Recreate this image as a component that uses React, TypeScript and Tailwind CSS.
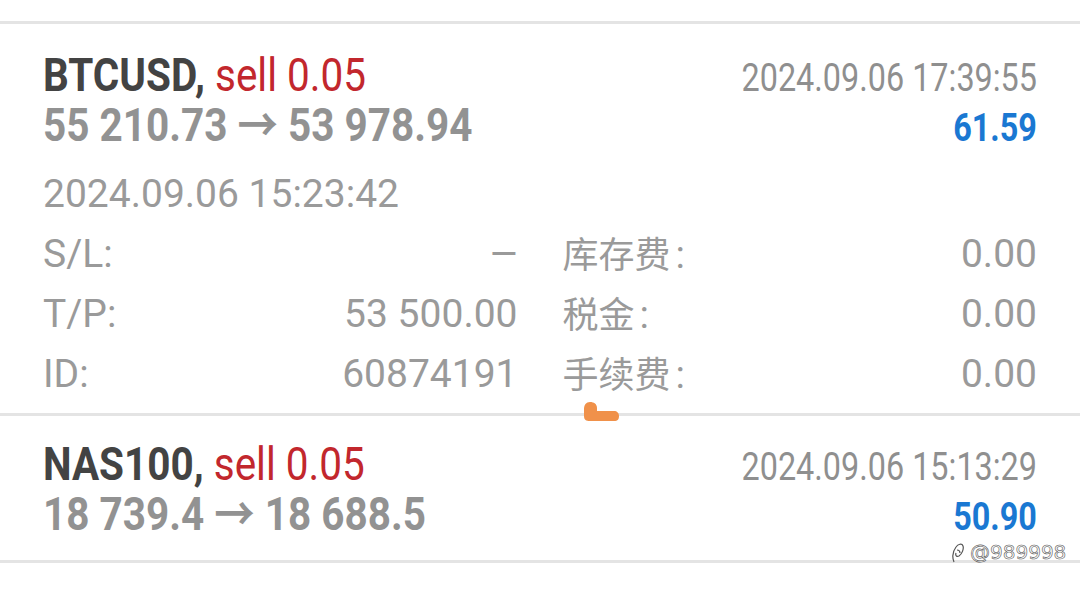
import React from "react";

type Deal = {
  symbol: string;
  side: string;
  open: string;
  close: string;
  time: string;
  profit: string;
};

const Divider = () => <div className="h-[3px] w-full bg-[#e4e4e4]" />;

function Header({ deal, top }: { deal: Deal; top: string }) {
  return (
    <div className={`px-[43px] ${top}`}>
      <div className="flex items-baseline justify-between h-[50px] leading-[50px]">
        <span className="inline-block origin-left scale-x-[0.88] whitespace-nowrap text-[46px]">
          <span className="font-bold text-[#434343]">{deal.symbol}, </span>
          <span className="text-[#c2272d]">{deal.side}</span>
        </span>
        <span className="inline-block origin-right scale-x-[0.83] whitespace-nowrap text-[39px] text-[#8f8f8f]">
          {deal.time}
        </span>
      </div>
      <div className="flex items-baseline justify-between h-[51px] leading-[51px]">
        <span className="inline-block origin-left scale-x-[0.88] whitespace-nowrap text-[46px] font-bold text-[#929292]">
          {deal.open} → {deal.close}
        </span>
        <span className="inline-block origin-right scale-x-[0.83] whitespace-nowrap text-[39px] font-bold text-[#1a78d2]">
          {deal.profit}
        </span>
      </div>
    </div>
  );
}

const rows = [
  ["S/L:", "—", "库存费", "0.00"],
  ["T/P:", "53 500.00", "税金", "0.00"],
  ["ID:", "60874191", "手续费", "0.00"],
];

export default function App() {
  const btc: Deal = {
    symbol: "BTCUSD",
    side: "sell 0.05",
    open: "55 210.73",
    close: "53 978.94",
    time: "2024.09.06 17:39:55",
    profit: "61.59",
  };
  const nas: Deal = {
    symbol: "NAS100",
    side: "sell 0.05",
    open: "18 739.4",
    close: "18 688.5",
    time: "2024.09.06 15:13:29",
    profit: "50.90",
  };

  return (
    <div className="relative w-[1080px] h-[591px] bg-white overflow-hidden font-['Roboto','Noto_Sans_CJK_SC',sans-serif]">
      <div className="h-[21px]" />
      <Divider />

      {/* first deal, expanded */}
      <Header deal={btc} top="pt-[26px]" />
      <div className="px-[43px] pt-[13px] pb-[9px] text-[39px] text-[#9a9a9a]">
        <div className="h-[60px] leading-[60px] whitespace-nowrap">2024.09.06 15:23:42</div>
        <div className="grid grid-cols-2 gap-x-[45px]">
          {rows.map((r) => (
            <React.Fragment key={r[0]}>
              <div className="flex justify-between h-[60px] leading-[60px] whitespace-nowrap">
                <span>{r[0]}</span>
                <span className={r[1] === "—" ? "inline-block origin-right scale-x-[0.9]" : ""}>{r[1]}</span>
              </div>
              <div className="flex justify-between h-[60px] leading-[60px] whitespace-nowrap">
                <span className="inline-block -translate-y-[2px]">
                  <span className="font-['Noto_Sans_CJK_SC',sans-serif] text-[36px]">{r[2]}</span>
                  <span className="ml-[5px]">:</span>
                </span>
                <span>{r[3]}</span>
              </div>
            </React.Fragment>
          ))}
        </div>
      </div>
      <Divider />

      {/* second deal */}
      <Header deal={nas} top="pt-[23px] pb-[20px]" />
      <Divider />

      {/* orange touch mark */}
      <svg className="absolute left-[583px] top-[401px]" width="37" height="21" viewBox="0 0 37 21">
        <path
          d="M7 1 C3 1 1 4 1 8 L1 15 C1 19 3 20 7 20 L31 20 C35 20 36 18 36 15 C36 12 34 10 31 10 L14 10 L14 7 C14 3 11 1 7 1 Z"
          fill="#f0914a"
        />
      </svg>

      {/* watermark */}
      <div className="absolute left-[951px] top-[540px] flex items-center gap-[5px] text-[20px] leading-[24px] text-white [-webkit-text-stroke:0.6px_#555] font-['DejaVu_Sans',sans-serif]">
        <svg width="14" height="24" viewBox="0 0 14 24" fill="none" stroke="#555" strokeWidth="1.2">
          <path d="M3 22 C1 17 2 11 5 7 C7 4 11 3 12 6 C13 9 11 14 8 16 C6 17 4 16 5 13" />
          <path d="M6 10 C8 10 9 11 9 13" />
        </svg>
        <span>@989998</span>
      </div>
    </div>
  );
}
